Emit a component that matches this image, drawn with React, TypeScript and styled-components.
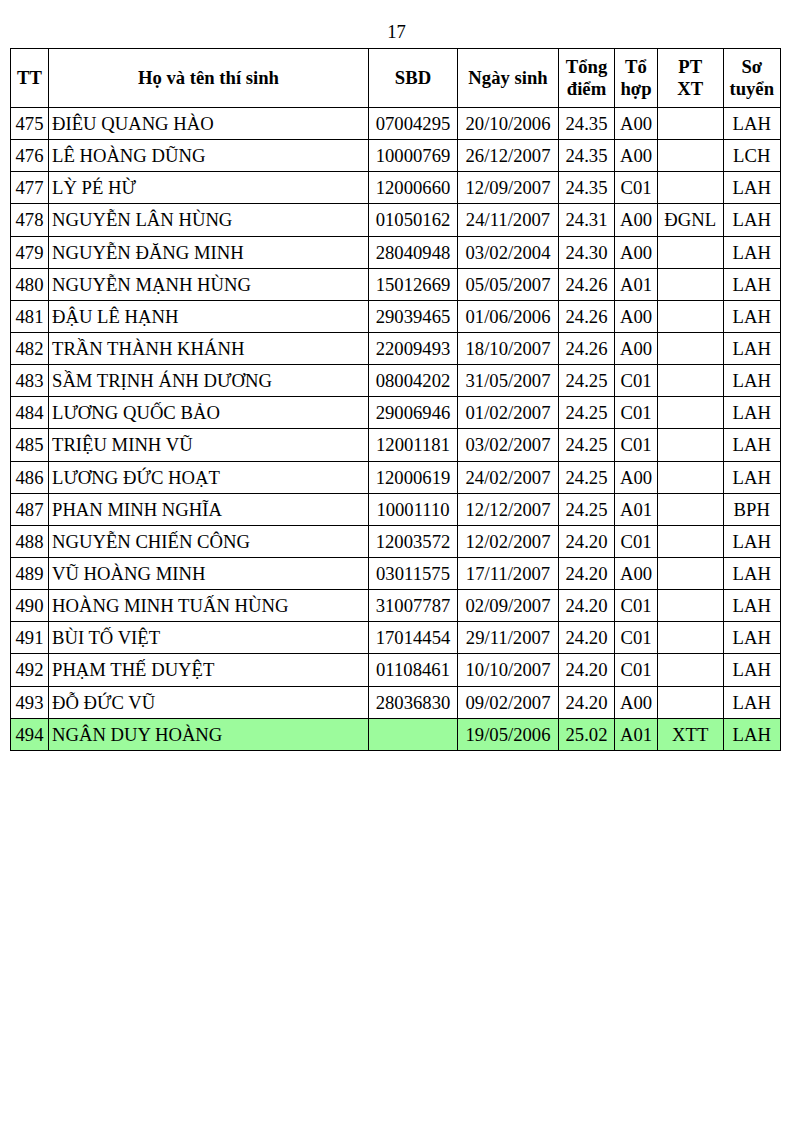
import React from "react";
import styled, { createGlobalStyle } from "styled-components";

const Global = createGlobalStyle`
  html, body { margin: 0; padding: 0; background: #ffffff; }
  body { font-family: "Liberation Serif", "Times New Roman", serif; color: #000; }
`;

const Page = styled.div`
  width: 793px;
  min-height: 1122px;
  padding-top: 21px;
  box-sizing: border-box;
  display: flex;
  flex-direction: column;
`;

const PageNum = styled.div`
  text-align: center;
  font-size: 18.67px;
  line-height: 22px;
  height: 22px;
  margin-bottom: 5px;
`;

const Table = styled.table`
  margin-left: 10px;
  width: 770px;
  border-collapse: collapse;
  table-layout: fixed;
  font-size: 18.67px;
  border: 1.5px solid #000;
`;

const HeadRow = styled.tr`
  height: 59px;
`;

const HeadCell = styled.th`
  border: 1px solid #000;
  font-weight: bold;
  line-height: 22px;
  padding: 0 1px;
  text-align: center;
  vertical-align: middle;
`;

const Row = styled.tr<{ $hl?: boolean }>`
  height: 32.15px;
  background: ${(p) => (p.$hl ? "#9cfb9c" : "#ffffff")};
`;

const Cell = styled.td<{ $align?: "left" | "center" }>`
  border: 1px solid #000;
  padding: 0 1px 0 ${(p) => (p.$align === "left" ? "3px" : "1px")};
  text-align: ${(p) => p.$align ?? "center"};
  vertical-align: middle;
  line-height: 21px;
  white-space: nowrap;
  overflow: hidden;
`;

type R = [string, string, string, string, string, string, string, string];

const rows: R[] = [
  ["475", "ĐIÊU QUANG HÀO", "07004295", "20/10/2006", "24.35", "A00", "", "LAH"],
  ["476", "LÊ HOÀNG DŨNG", "10000769", "26/12/2007", "24.35", "A00", "", "LCH"],
  ["477", "LỲ PÉ HỪ", "12000660", "12/09/2007", "24.35", "C01", "", "LAH"],
  ["478", "NGUYỄN LÂN HÙNG", "01050162", "24/11/2007", "24.31", "A00", "ĐGNL", "LAH"],
  ["479", "NGUYỄN ĐĂNG MINH", "28040948", "03/02/2004", "24.30", "A00", "", "LAH"],
  ["480", "NGUYỄN MẠNH HÙNG", "15012669", "05/05/2007", "24.26", "A01", "", "LAH"],
  ["481", "ĐẬU LÊ HẠNH", "29039465", "01/06/2006", "24.26", "A00", "", "LAH"],
  ["482", "TRẦN THÀNH KHÁNH", "22009493", "18/10/2007", "24.26", "A00", "", "LAH"],
  ["483", "SẦM TRỊNH ÁNH DƯƠNG", "08004202", "31/05/2007", "24.25", "C01", "", "LAH"],
  ["484", "LƯƠNG QUỐC BẢO", "29006946", "01/02/2007", "24.25", "C01", "", "LAH"],
  ["485", "TRIỆU MINH VŨ", "12001181", "03/02/2007", "24.25", "C01", "", "LAH"],
  ["486", "LƯƠNG ĐỨC HOẠT", "12000619", "24/02/2007", "24.25", "A00", "", "LAH"],
  ["487", "PHAN MINH NGHĨA", "10001110", "12/12/2007", "24.25", "A01", "", "BPH"],
  ["488", "NGUYỄN CHIẾN CÔNG", "12003572", "12/02/2007", "24.20", "C01", "", "LAH"],
  ["489", "VŨ HOÀNG MINH", "03011575", "17/11/2007", "24.20", "A00", "", "LAH"],
  ["490", "HOÀNG MINH TUẤN HÙNG", "31007787", "02/09/2007", "24.20", "C01", "", "LAH"],
  ["491", "BÙI TỐ VIỆT", "17014454", "29/11/2007", "24.20", "C01", "", "LAH"],
  ["492", "PHẠM THẾ DUYỆT", "01108461", "10/10/2007", "24.20", "C01", "", "LAH"],
  ["493", "ĐỖ ĐỨC VŨ", "28036830", "09/02/2007", "24.20", "A00", "", "LAH"],
  ["494", "NGÂN DUY HOÀNG", "", "19/05/2006", "25.02", "A01", "XTT", "LAH"],
];

const widths = [38, 320, 89, 101, 56, 43, 65.5, 57.5];

export default function App() {
  return (
    <Page>
      <Global />
      <PageNum>17</PageNum>
      <Table>
        <colgroup>
          {widths.map((w, i) => (
            <col key={i} style={{ width: `${w}px` }} />
          ))}
        </colgroup>
        <thead>
          <HeadRow>
            <HeadCell>TT</HeadCell>
            <HeadCell>Họ và tên thí sinh</HeadCell>
            <HeadCell>SBD</HeadCell>
            <HeadCell>Ngày sinh</HeadCell>
            <HeadCell>
              Tổng
              <br />
              điểm
            </HeadCell>
            <HeadCell>
              Tổ
              <br />
              hợp
            </HeadCell>
            <HeadCell>
              PT
              <br />
              XT
            </HeadCell>
            <HeadCell>
              Sơ
              <br />
              tuyển
            </HeadCell>
          </HeadRow>
        </thead>
        <tbody>
          {rows.map((r) => (
            <Row key={r[0]} $hl={r[0] === "494"}>
              <Cell>{r[0]}</Cell>
              <Cell $align="left">{r[1]}</Cell>
              <Cell>{r[2]}</Cell>
              <Cell>{r[3]}</Cell>
              <Cell>{r[4]}</Cell>
              <Cell>{r[5]}</Cell>
              <Cell>{r[6]}</Cell>
              <Cell>{r[7]}</Cell>
            </Row>
          ))}
        </tbody>
      </Table>
    </Page>
  );
}
